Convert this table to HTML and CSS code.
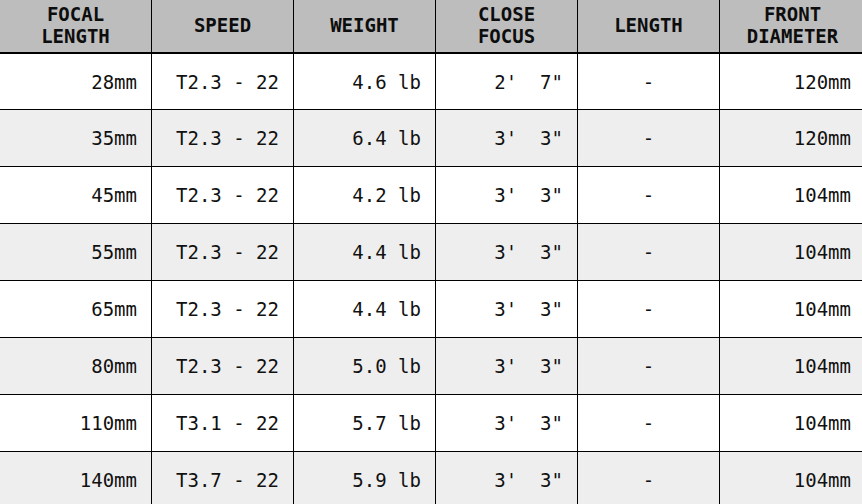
FILE: index.html
```html
<!DOCTYPE html>
<html lang="en">
<head>
<meta charset="utf-8">
<title>Lens specifications</title>
<link rel="stylesheet" href="styles.css">
</head>
<body>
<table class="specs">
  <colgroup>
    <col class="c1"><col class="cn"><col class="cn"><col class="cn"><col class="cn"><col class="cl">
  </colgroup>
  <thead>
    <tr>
      <th>FOCAL<br>LENGTH</th>
      <th>SPEED</th>
      <th>WEIGHT</th>
      <th>CLOSE<br>FOCUS</th>
      <th>LENGTH</th>
      <th>FRONT<br>DIAMETER</th>
    </tr>
  </thead>
  <tbody>
    <tr><td>28mm</td><td>T2.3 - 22</td><td>4.6 lb</td><td>2'&nbsp;&nbsp;7"</td><td class="mid">-</td><td>120mm</td></tr>
    <tr><td>35mm</td><td>T2.3 - 22</td><td>6.4 lb</td><td>3'&nbsp;&nbsp;3"</td><td class="mid">-</td><td>120mm</td></tr>
    <tr><td>45mm</td><td>T2.3 - 22</td><td>4.2 lb</td><td>3'&nbsp;&nbsp;3"</td><td class="mid">-</td><td>104mm</td></tr>
    <tr><td>55mm</td><td>T2.3 - 22</td><td>4.4 lb</td><td>3'&nbsp;&nbsp;3"</td><td class="mid">-</td><td>104mm</td></tr>
    <tr><td>65mm</td><td>T2.3 - 22</td><td>4.4 lb</td><td>3'&nbsp;&nbsp;3"</td><td class="mid">-</td><td>104mm</td></tr>
    <tr><td>80mm</td><td>T2.3 - 22</td><td>5.0 lb</td><td>3'&nbsp;&nbsp;3"</td><td class="mid">-</td><td>104mm</td></tr>
    <tr><td>110mm</td><td>T3.1 - 22</td><td>5.7 lb</td><td>3'&nbsp;&nbsp;3"</td><td class="mid">-</td><td>104mm</td></tr>
    <tr><td>140mm</td><td>T3.7 - 22</td><td>5.9 lb</td><td>3'&nbsp;&nbsp;3"</td><td class="mid">-</td><td>104mm</td></tr>
  </tbody>
</table>
</body>
</html>
```

FILE: styles.css
```css
html, body {
  margin: 0;
  padding: 0;
  background: #ffffff;
  overflow: hidden;
}

.specs {
  border-collapse: separate;
  border-spacing: 0;
  table-layout: fixed;
  width: 866px;
  font-family: "DejaVu Sans Mono", "Liberation Mono", monospace;
  font-size: 19px;
  color: #111111;
}

.c1 { width: 152px; }
.cn { width: 142px; }
.cl { width: 146px; }

.specs th,
.specs td {
  border-right: 1px solid #000;
  border-bottom: 1px solid #000;
  padding: 0 14px;
  box-sizing: border-box;
  white-space: nowrap;
}

.specs th {
  height: 54px;
  background: #bdbdbd;
  border-bottom: 2px solid #000;
  font-weight: bold;
  text-align: center;
  line-height: 22px;
  padding-bottom: 3px;
  color: #0d0d0d;
}

.specs td {
  height: 57px;
  text-align: right;
  vertical-align: middle;
}

.specs tbody tr:first-child td {
  height: 56px;
}

.specs tbody tr:nth-child(even) td {
  background: #eeeeee;
}

.specs td.mid {
  text-align: center;
}
```
